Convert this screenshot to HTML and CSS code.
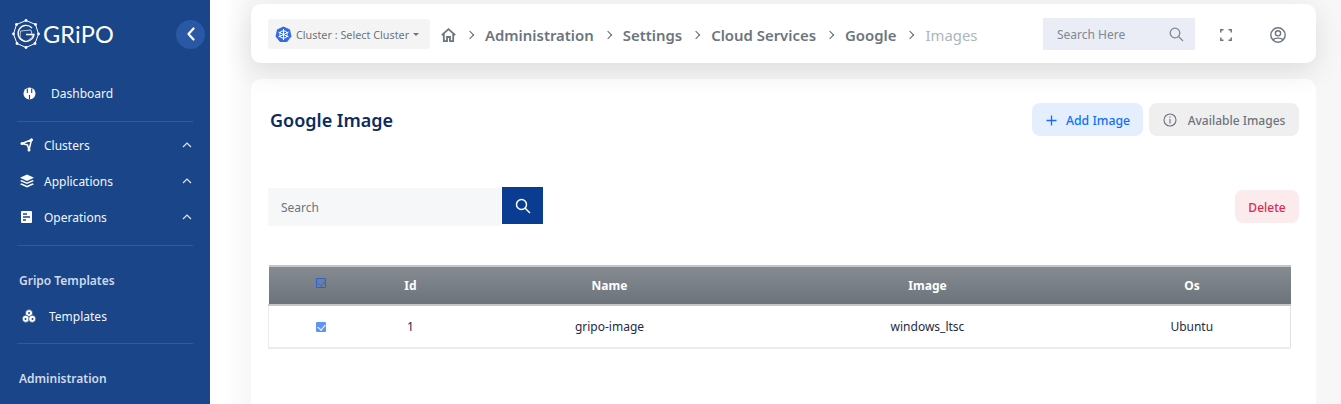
FILE: index.html
```html
<!DOCTYPE html>
<html>
  <head>
    <meta charset="utf-8">
    <title>Google Image</title>
    <link rel="stylesheet" href="styles.css">
  </head>
  <body>
    <aside class="sidebar">
      <div class="brand">
        <svg class="logo" width="28" height="30" viewBox="0 0 28 30" fill="none" stroke="#fff" stroke-width="1">
          <path d="M14 1.500 L23.500 5.500 L26.500 15 L23 24.500 L14 28.500 L5 24.500 L1.500 15 L4.500 5.500 Z"/>
          <path d="M20 9 A8 8 0 1 0 22 15.500 L14 15.500" stroke-width="1.300"/>
          <path d="M8.500 12 L19 11 L20.500 18 L14 23 L8 19 Z" stroke-width=".7"/>
          <g fill="#fff" stroke="none">
            <circle cx="14" cy="1.500" r="1.400"/><circle cx="23.500" cy="5.500" r="1.400"/><circle cx="26.500" cy="15" r="1.400"/><circle cx="23" cy="24.500" r="1.400"/>
            <circle cx="14" cy="28.500" r="1.400"/><circle cx="5" cy="24.500" r="1.400"/><circle cx="1.500" cy="15" r="1.400"/><circle cx="4.500" cy="5.500" r="1.400"/>
          </g>
        </svg>
        <span class="brand-name">GRiPO</span>
        <button class="collapse">
          <svg width="12" height="14" viewBox="0 0 12 14" fill="none" stroke="#fff" stroke-width="2.200" stroke-linecap="round" stroke-linejoin="round"><path d="M8.500 1.500 L3.500 7 L8.500 12.500"/></svg>
        </button>
      </div>

      <a class="nav-item nav-top">
        <svg class="nav-icon" width="13" height="13" viewBox="0 0 13 13"><circle cx="6.500" cy="6.500" r="6" fill="#fff"/><path d="M4.300 1.500 V6 M8.700 1.500 V6 M6.500 8 V12.500" stroke="#1a4588" stroke-width="1.100"/></svg>
        <span>Dashboard</span>
      </a>
      <hr class="rule">
      <a class="nav-item">
        <svg class="nav-icon" width="14" height="14" viewBox="0 0 14 14" fill="none" stroke="#fff" stroke-width="1.500"><path d="M2 5.500 L11.500 1.800 L9 12 L7.500 7 Z" stroke-linejoin="round"/><g fill="#fff" stroke="none"><circle cx="11.500" cy="1.800" r="1.500"/><circle cx="2" cy="5.500" r="1.500"/><circle cx="9" cy="12" r="1.500"/></g></svg>
        <span>Clusters</span>
        <svg class="caret" width="10" height="6" viewBox="0 0 10 6" fill="none" stroke="#dfe6f2" stroke-width="1.200"><path d="M1 5 L5 1 L9 5"/></svg>
      </a>
      <a class="nav-item">
        <svg class="nav-icon" width="14" height="14" viewBox="0 0 14 14" fill="#fff"><path d="M7 .5 L14 3.700 L7 6.900 L0 3.700 Z"/><path d="M1.500 6 L7 8.500 L12.500 6 L14 6.900 L7 10.100 L0 6.900 Z"/><path d="M1.500 9.300 L7 11.700 L12.500 9.300 L14 10.200 L7 13.400 L0 10.200 Z"/></svg>
        <span>Applications</span>
        <svg class="caret" width="10" height="6" viewBox="0 0 10 6" fill="none" stroke="#dfe6f2" stroke-width="1.200"><path d="M1 5 L5 1 L9 5"/></svg>
      </a>
      <a class="nav-item">
        <svg class="nav-icon" width="14" height="14" viewBox="0 0 14 14"><rect x="1" y="1" width="11" height="12" rx="1" fill="#fff"/><path d="M3 4 H7 M3 7 H10 M3 10 H6" stroke="#1a4588" stroke-width="1.300"/></svg>
        <span>Operations</span>
        <svg class="caret" width="10" height="6" viewBox="0 0 10 6" fill="none" stroke="#dfe6f2" stroke-width="1.200"><path d="M1 5 L5 1 L9 5"/></svg>
      </a>
      <hr class="rule rule-ops">
      <div class="nav-title title-templates">Gripo Templates</div>
      <a class="nav-item nav-sub">
        <svg class="nav-icon" width="14" height="14" viewBox="0 0 14 14" fill="#fff" stroke="#1a4588" stroke-width=".7"><circle cx="7" cy="4.200" r="3.600"/><circle cx="3.800" cy="9.800" r="3.600"/><circle cx="10.200" cy="9.800" r="3.600"/><g fill="#1a4588" stroke="none"><circle cx="7" cy="4" r="1"/><circle cx="3.500" cy="10" r="1"/><circle cx="10.500" cy="10" r="1"/></g></svg>
        <span>Templates</span>
      </a>
      <hr class="rule rule-tpl">
      <div class="nav-title title-admin">Administration</div>
    </aside>

    <main class="content">
      <header class="topbar">
        <div class="cluster-select">
          <svg width="17" height="17" viewBox="0 0 17 17"><path d="M8.500 .5 L15 3.500 L16.500 10.500 L12 16 H5 L.5 10.500 L2 3.500 Z" fill="#326ce5"/><g fill="none" stroke="#fff" stroke-width="1"><circle cx="8.500" cy="8.500" r="3.800"/><path d="M8.500 3 V14 M3.500 6 L13.500 11 M3.500 11 L13.500 6"/></g></svg>
          <span>Cluster : Select Cluster</span>
          <i class="select-caret"></i>
        </div>
        <nav class="crumbs">
          <svg class="home" width="15" height="14" viewBox="0 0 15 14" fill="none" stroke="#6c757d" stroke-width="1.800"><path d="M.8 7.200 L7.500 1.200 L14.200 7.200"/><path d="M2.800 6 V13.200 H6 V9 H9 V13.200 H12.200 V6"/></svg>
          <span class="sep"></span><a>Administration</a>
          <span class="sep"></span><a>Settings</a>
          <span class="sep"></span><a>Cloud Services</a>
          <span class="sep"></span><a>Google</a>
          <span class="sep"></span><a class="current">Images</a>
        </nav>
        <div class="top-search">
          <span>Search Here</span>
          <svg width="15" height="15" viewBox="0 0 15 15" fill="none" stroke="#7e8794" stroke-width="1.300"><circle cx="6" cy="6" r="4.800"/><path d="M9.500 9.500 L14 14"/></svg>
        </div>
        <svg class="fullscreen" width="12" height="12" viewBox="0 0 12 12" fill="none" stroke="#6c757d" stroke-width="1.500"><path d="M.8 3.500 V.8 H3.500 M8.500 .8 H11.200 V3.500 M11.200 8.500 V11.200 H8.500 M3.500 11.200 H.8 V8.500"/></svg>
        <svg class="account" width="16" height="16" viewBox="0 0 16 16" fill="none" stroke="#6c757d" stroke-width="1.400"><circle cx="8" cy="8" r="7.200"/><circle cx="8" cy="6.300" r="2.600"/><path d="M3.200 13 C4.500 10.500 11.500 10.500 12.800 13"/></svg>
      </header>

      <section class="card">
        <div class="card-head">
          <h1>Google Image</h1>
          <div class="head-actions">
            <button class="btn btn-add">
              <svg width="11" height="11" viewBox="0 0 11 11" stroke="#0d6efd" stroke-width="1.300"><path d="M5.500 .5 V10.500 M.5 5.500 H10.500"/></svg>
              <span>Add Image</span>
            </button>
            <button class="btn btn-info">
              <svg width="14" height="14" viewBox="0 0 14 14" fill="none" stroke="#6c757d" stroke-width="1.100"><circle cx="7" cy="7" r="6"/><path d="M7 6 V10.500 M7 3.500 V4.800"/></svg>
              <span>Available Images</span>
            </button>
          </div>
        </div>

        <div class="tools">
          <div class="search">
            <span class="search-input">Search</span>
            <button class="search-btn">
              <svg width="16" height="16" viewBox="0 0 16 16" fill="none" stroke="#fff" stroke-width="1.500"><circle cx="6.500" cy="6.500" r="5"/><path d="M10 10 L15 15"/></svg>
            </button>
          </div>
          <button class="btn btn-delete">Delete</button>
        </div>

        <table class="grid">
          <thead>
            <tr>
              <th class="col-check"><span class="check check-head"></span></th>
              <th class="col-id">Id</th>
              <th class="col-name">Name</th>
              <th class="col-image">Image</th>
              <th class="col-os">Os</th>
            </tr>
          </thead>
          <tbody>
            <tr>
              <td><span class="check"></span></td>
              <td>1</td>
              <td>gripo-image</td>
              <td>windows_ltsc</td>
              <td class="col-os">Ubuntu</td>
            </tr>
          </tbody>
        </table>
      </section>
    </main>
  </body>
</html>
```

FILE: styles.css
```css
*{
  box-sizing: border-box;
}
html,body{
  height: 100%;
  overflow: hidden;
}
body{
  margin: 0;
  display: flex;
  background: #f8f8f8;
  font-family: "Noto Sans", "Open Sans", sans-serif;
  font-size: 12px;
  color: #212529;
}
button{
  font-family: inherit;
  border: 0;
}

/* sidebar */
.sidebar{
  width: 210px;
  flex: none;
  height: 404px;
  background: #1a4588;
  color: #f2f6fc;
  overflow: hidden;
}
.brand{
  display: flex;
  align-items: center;
  height: 68px;
  padding-left: 12px;
}
.brand-name{
  margin-left: 3px;
  font-family: "Lato", sans-serif;
  font-size: 23.500px;
  letter-spacing: .2px;
  color: #fff;
}
.collapse{
  width: 29px;
  height: 29px;
  margin-left: auto;
  margin-right: 5px;
  padding: 0;
  display: flex;
  align-items: center;
  justify-content: center;
  border-radius: 50%;
  background: #2b58a4;
}
.nav-item{
  display: flex;
  align-items: center;
  height: 36px;
  padding-left: 20px;
  padding-right: 18px;
}
.nav-icon{
  flex: none;
  margin-right: 10px;
}
.nav-item .caret{
  margin-left: auto;
}
.nav-top{
  margin-top: 7px;
  padding-left: 23px;
}
.nav-top .nav-icon{
  margin-right: 15px;
}
.nav-sub{
  padding-left: 22px;
}
.nav-sub .nav-icon{
  margin-right: 13px;
}
.rule{
  height: 1px;
  margin: 10px 17px 5px;
  border: 0;
  background: #2f5a9e;
}
.rule-tpl{
  margin-top: 9px;
}
.nav-title{
  padding-left: 19px;
  font-weight: 600;
  color: #cfdaec;
}
.title-templates{
  margin-top: 26px;
  margin-bottom: 9px;
}
.title-admin{
  margin-top: 26px;
}

/* main column */
.content{
  flex: 1;
  min-width: 0;
  padding: 4px 25px 0 41px;
  background: linear-gradient(90deg, #fff 14px, #f7f7f7 40px);
}
.topbar{
  position: relative;
  z-index: 1;
  display: flex;
  align-items: center;
  height: 59px;
  padding: 0 17px;
  background: #fff;
  border-radius: 10px;
  box-shadow: 0 8px 28px rgba(0,0,0,.11);
}
.cluster-select{
  display: flex;
  align-items: center;
  gap: 4px;
  width: 162px;
  height: 30px;
  margin-top: 1px;
  margin-right: 11px;
  padding: 0 7px;
  border-radius: 3px;
  background: #f4f4f5;
  font-size: 10.800px;
  color: #6c757d;
}
.select-caret{
  width: 0;
  height: 0;
  border: 3.500px solid transparent;
  border-top-color: #6c757d;
  border-bottom: 0;
}
.crumbs{
  display: flex;
  align-items: center;
  margin-top: 2px;
  font-size: 14.900px;
  font-weight: 600;
  color: #6c757d;
}
.sep{
  width: 6px;
  height: 6px;
  margin: 0 12px 0 11px;
  border-top: 1.500px solid #5e6670;
  border-right: 1.500px solid #5e6670;
  transform: rotate(45deg);
}
.current{
  font-weight: 400;
  color: #adb5bd;
}
.top-search{
  display: flex;
  align-items: center;
  justify-content: space-between;
  width: 152px;
  height: 32px;
  margin-top: 1px;
  margin-left: auto;
  padding: 0 11px 0 14px;
  background: #eaedf5;
  font-size: 12px;
  color: #7e8794;
}
.fullscreen{
  margin-top: 3px;
  margin-left: 25px;
}
.account{
  margin-top: 3px;
  margin-left: 38px;
  margin-right: 13px;
}

/* card */
.card{
  height: 330px;
  margin-top: 16px;
  padding: 0 17px 0 17px;
  background: #fff;
  border-radius: 10px 10px 0 0;
}
.card-head{
  display: flex;
  align-items: center;
  justify-content: space-between;
  padding-top: 24px;
  padding-left: 2px;
}
h1{
  margin: 0;
  font-size: 18px;
  font-weight: 600;
  color: #0b2c5f;
}
.head-actions{
  display: flex;
  gap: 6px;
}
.btn{
  display: flex;
  align-items: center;
  height: 33px;
  padding: 1px 0 0;
  border-radius: 8px;
  font-size: 12px;
  font-weight: 500;
}
.btn-add{
  width: 111px;
  padding-left: 1px;
  justify-content: center;
  gap: 9px;
  background: #e5eefd;
  color: #0d6efd;
}
.btn-add span{
  font-size: 12.300px;
}
.btn-info{
  width: 150px;
  justify-content: center;
  gap: 11px;
  background: #efefef;
  color: #6c757d;
}
.tools{
  display: flex;
  align-items: center;
  justify-content: space-between;
  margin-top: 51px;
}
.search{
  display: flex;
  align-items: flex-start;
  height: 39px;
}
.search-input{
  display: flex;
  align-items: center;
  width: 233px;
  height: 38px;
  margin-top: 1px;
  margin-right: 1px;
  padding: 1px 0 0 13px;
  background: #f6f7f9;
  font-size: 12px;
  color: #6c757d;
}
.search-btn{
  width: 41px;
  height: 37px;
  display: flex;
  align-items: center;
  justify-content: center;
  padding: 0;
  background: #0a3d91;
}
.btn-delete{
  width: 64px;
  justify-content: center;
  background: #fcebed;
  color: #e0294a;
}

/* table */
.grid{
  width: 1023px;
  margin-top: 39px;
  border-collapse: collapse;
  table-layout: fixed;
  font-size: 12px;
}
.grid th{
  height: 39px;
  border-top: 2px solid #c4c7ca;
  border-bottom: 2px solid #c4c7ca;
  background: linear-gradient(#858b91, #6c737b);
  color: #fff;
  font-weight: 700;
}
.grid td{
  height: 43px;
  border-bottom: 2px solid #ececec;
  background: #fff;
  color: #1f2a44;
  text-align: center;
}
.grid td:first-child{
  border-left: 1px solid #ececec;
}
.grid td:last-child{
  border-right: 1px solid #e2e2e2;
}
.col-check{
  width: 106px;
}
.col-id{
  width: 72px;
}
.col-name{
  width: 326px;
}
.col-image{
  width: 310px;
}
.grid .col-os{
  padding-left: 12px;
}
.check{
  display: inline-block;
  width: 10px;
  height: 10px;
  margin-right: 1px;
  position: relative;
  top: -1px;
  vertical-align: middle;
  background: #5f96f5;
  border-radius: 1px;
}
.check::after{
  content: "";
  position: absolute;
  left: 3px;
  top: 1px;
  width: 4px;
  height: 6px;
  border-right: 1px solid #fff;
  border-bottom: 1px solid #fff;
  transform: rotate(40deg);
}
.check-head{
  margin-bottom: 5px;
  background: #6c7f9c;
  outline: 1px solid #2a63cf;
  outline-offset: -1px;
}
.check-head::after{
  border-color: #3f6fbd;
}
```
